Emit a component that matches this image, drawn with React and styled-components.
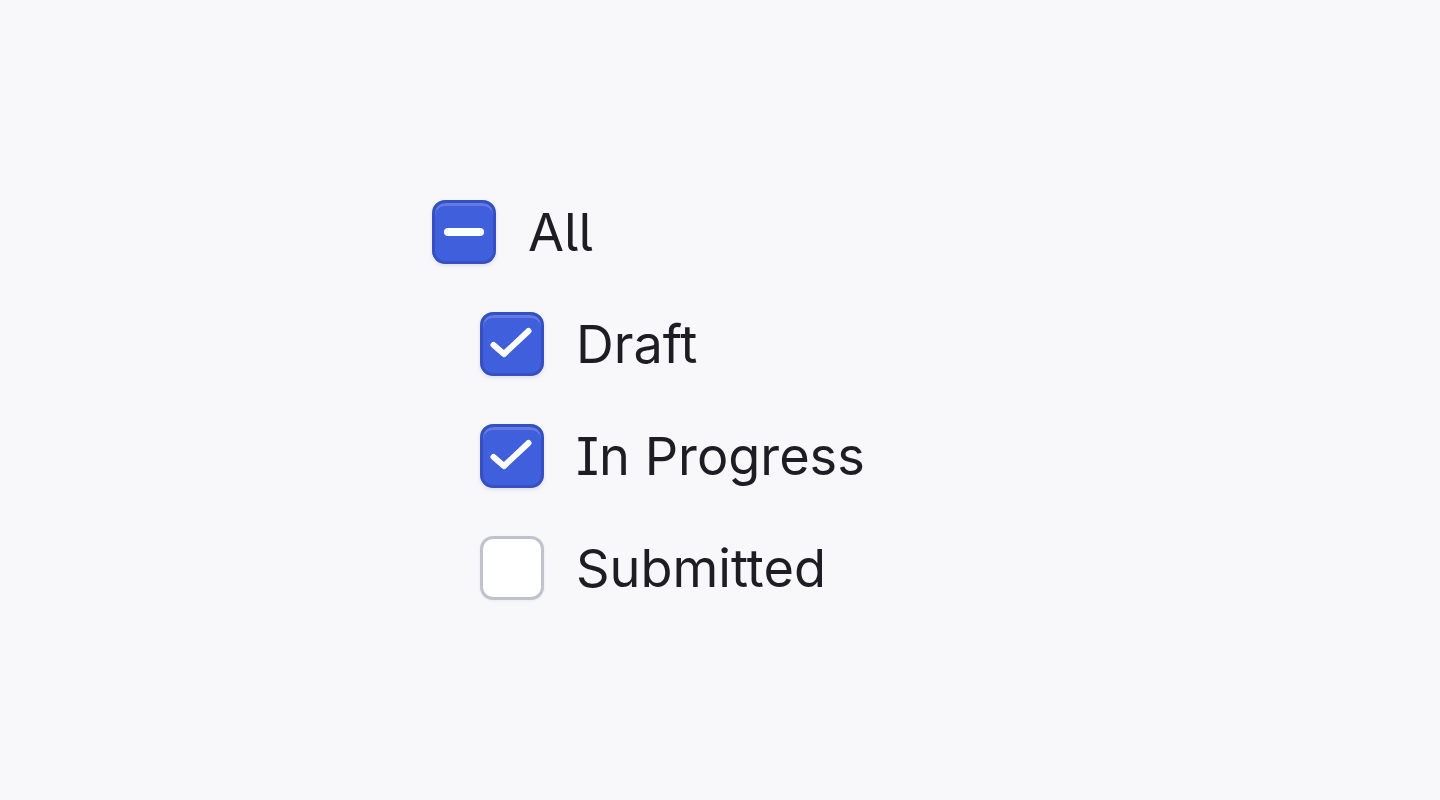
import React from "react";
import styled, { createGlobalStyle, css } from "styled-components";

const Global = createGlobalStyle`
  html, body { margin: 0; padding: 0; background: #f8f8fb; }
  body { font-family: Inter, "Noto Sans", sans-serif; }
`;

const Page = styled.div`
  min-height: 800px;
  display: flex;
  align-items: center;
  justify-content: center;
`;

const List = styled.div`
  width: 576px;
  display: flex;
  flex-direction: column;
  gap: 48px;
`;

const Row = styled.label`
  display: flex;
  align-items: center;
  gap: 32px;
  height: 64px;
  padding-left: ${(p) => (p.$indent ? 48 : 0)}px;
  cursor: pointer;
`;

const Box = styled.span`
  box-sizing: border-box;
  width: 64px;
  height: 64px;
  flex: none;
  border-radius: 13px;
  display: flex;
  align-items: center;
  justify-content: center;
  ${(p) =>
    p.$on
      ? css`
          background: #3f5fdc;
          border: 3px solid #3650c2;
          box-shadow: inset 0 3px 0 rgba(255, 255, 255, 0.18),
            0 2px 4px rgba(40, 50, 120, 0.12);
        `
      : css`
          background: #ffffff;
          border: 3px solid #c2c2cf;
          box-shadow: 0 1px 3px rgba(40, 40, 70, 0.06);
        `}
`;

const Label = styled.span`
  font-family: Inter, "Noto Sans", sans-serif;
  font-feature-settings: "ss02" 1, "cv05" 1, "cv08" 1;
  font-size: 52.3px;
  line-height: 1;
  color: #1d1d23;
  letter-spacing: 0;
`;

const Check = () => (
  <svg width="58" height="58" viewBox="0 0 58 58" fill="none">
    <path
      d="M10.5 30 L21 39 L45.5 16"
      stroke="#fff"
      strokeWidth="6"
      strokeLinecap="round"
      strokeLinejoin="round"
    />
  </svg>
);

const Dash = styled.span`
  width: 40px;
  height: 8px;
  border-radius: 4px;
  background: #fff;
`;

const items = [
  { label: "Draft", state: "checked" },
  { label: "In Progress", state: "checked" },
  { label: "Submitted", state: "off" },
];

export default function App() {
  return (
    <>
      <Global />
      <Page>
        <List>
          <Row>
            <Box $on>
              <Dash />
            </Box>
            <Label>All</Label>
          </Row>
          {items.map((it) => (
            <Row $indent key={it.label}>
              <Box $on={it.state === "checked"}>
                {it.state === "checked" && <Check />}
              </Box>
              <Label>{it.label}</Label>
            </Row>
          ))}
        </List>
      </Page>
    </>
  );
}
